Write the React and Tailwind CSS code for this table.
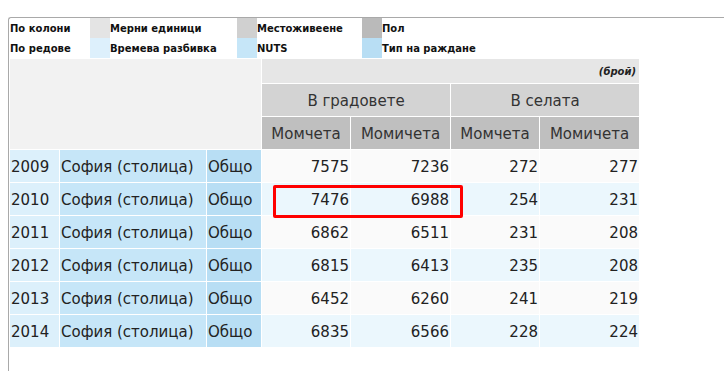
import React from "react";

const rows = [
  ["2009", "7575", "7236", "272", "277"],
  ["2010", "7476", "6988", "254", "231"],
  ["2011", "6862", "6511", "231", "208"],
  ["2012", "6815", "6413", "235", "208"],
  ["2013", "6452", "6260", "241", "219"],
  ["2014", "6835", "6566", "228", "224"],
];

function Legend() {
  return (
    <div className="grid grid-cols-[80px_20px_127px_20px_105px_20px_1fr] grid-rows-[20px_20px] text-[10px] font-bold text-[#111] leading-none">
      <div className="flex items-center pt-px">По колони</div>
      <div className="bg-[#e4e4e4]" />
      <div className="flex items-center pt-px">Мерни единици</div>
      <div className="bg-[#d0d0d0]" />
      <div className="flex items-center pt-px">Местоживеене</div>
      <div className="bg-[#bababa]" />
      <div className="flex items-center pt-px">Пол</div>
      <div className="flex items-center pt-px">По редове</div>
      <div className="bg-[#ddf0fc]" />
      <div className="flex items-center pt-px">Времева разбивка</div>
      <div className="bg-[#c6e6f8]" />
      <div className="flex items-center pt-px">NUTS</div>
      <div className="bg-[#b8def4]" />
      <div className="flex items-center pt-px">Тип на раждане</div>
    </div>
  );
}

function DataTable() {
  return (
    <div className="grid w-fit grid-cols-[49px_146px_54px_88px_99px_88px_99px] grid-rows-[24px_32px_32px_repeat(6,32px)] gap-px bg-white text-[15px] leading-none">
      <div className="col-start-1 col-end-4 row-start-1 row-end-4 bg-[#f2f2f2]" />
      <div className="col-start-4 col-end-8 row-start-1 flex items-center justify-end bg-[#e6e6e6] pr-[3px] pt-px text-[10px] font-bold italic text-[#222]">
        (брой)
      </div>
      <div className="col-start-4 col-end-6 row-start-2 flex items-center justify-center bg-[#d3d3d3] pt-[3px] text-[#333]">
        В градовете
      </div>
      <div className="col-start-6 col-end-8 row-start-2 flex items-center justify-center bg-[#d3d3d3] pt-[3px] text-[#333]">
        В селата
      </div>
      {["Момчета", "Момичета", "Момчета", "Момичета"].map((t, i) => (
        <div
          key={i}
          className="row-start-3 flex items-center justify-center bg-[#bfbfbf] pt-[3px] text-[#333]"
        >
          {t}
        </div>
      ))}
      {rows.map((r, ri) => {
        const bg = ri % 2 === 0 ? "bg-[#fafafa]" : "bg-[#ebf7fd]";
        return (
          <React.Fragment key={r[0]}>
            <div className="flex items-center bg-[#dcf0fb] pl-px pt-[3px] text-[#222]">{r[0]}</div>
            <div className="flex items-center bg-[#c6e6f8] pl-px pt-[3px] text-[#222]">София (столица)</div>
            <div className="flex items-center bg-[#b8def4] pl-px pt-[3px] text-[#222]">Общо</div>
            {r.slice(1).map((v, ci) => (
              <div key={ci} className={`flex items-center justify-end pr-px pt-[3px] text-[#222] ${bg}`}>
                {v}
              </div>
            ))}
          </React.Fragment>
        );
      })}
    </div>
  );
}

export default function App() {
  return (
    <div
      className="relative h-[371px] w-[724px] overflow-hidden bg-white pt-[17px] pl-2"
      style={{ fontFamily: '"DejaVu Sans", Verdana, sans-serif' }}
    >
      <div className="h-[360px] rounded-tl-[3px] border-l border-t border-[#a9a9a9] pl-px">
        <Legend />
        <div className="mt-px">
          <DataTable />
        </div>
      </div>
      <div className="absolute left-[273px] top-[185px] h-[33px] w-[190px] rounded-[2px] border-[3px] border-[#ff0000]" />
    </div>
  );
}
